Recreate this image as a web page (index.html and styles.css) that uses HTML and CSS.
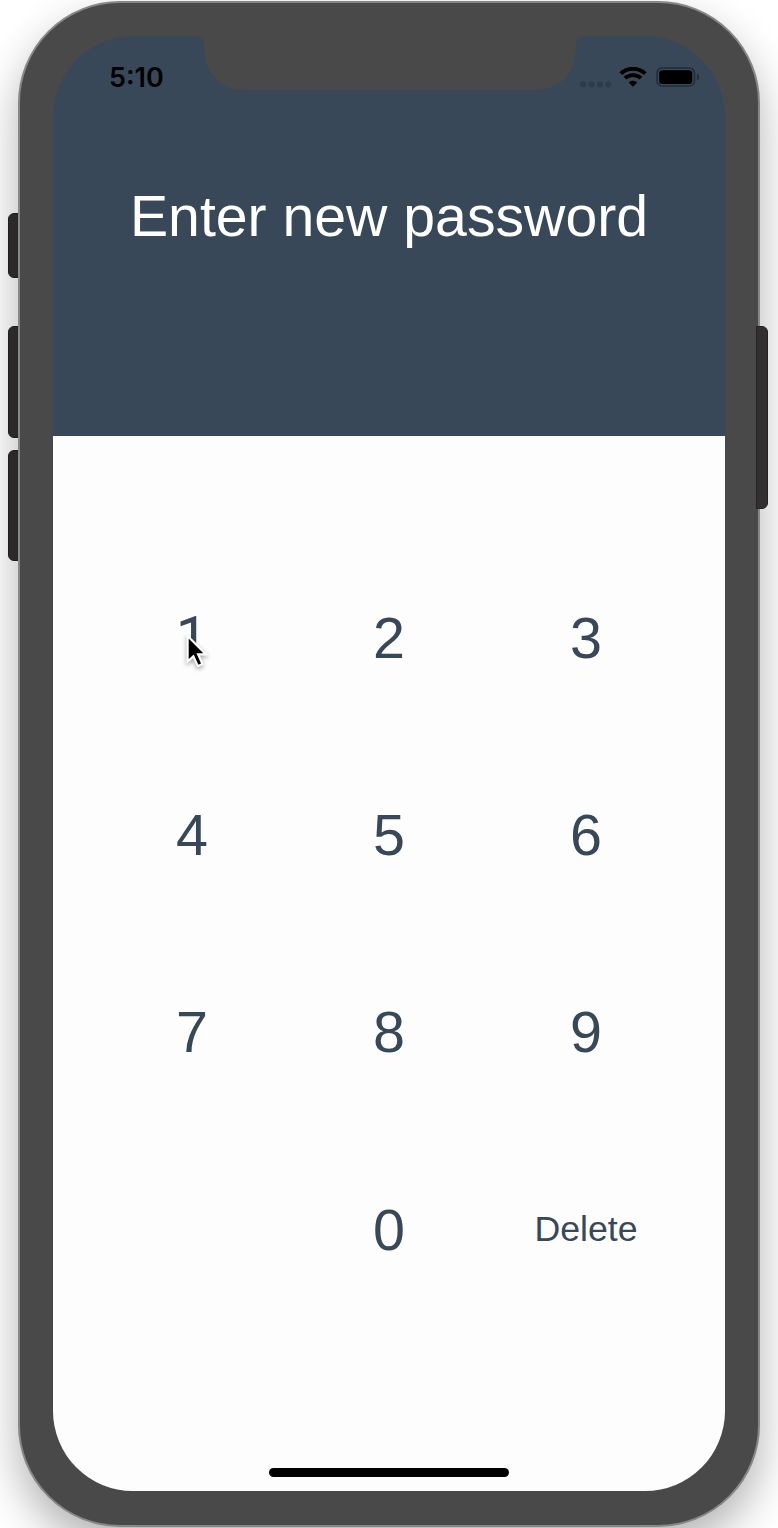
FILE: index.html
```
<!DOCTYPE html>
<html lang="en">
<head>
<meta charset="utf-8">
<title>Enter new password</title>
<link rel="stylesheet" href="styles.css">
</head>
<body>
<div class="phone">
  <span class="side-button mute"></span>
  <span class="side-button volume-up"></span>
  <span class="side-button volume-down"></span>
  <div class="case">
    <div class="screen">
      <header class="header">
        <div class="status-bar">
          <span class="time">5:10</span>
          <div class="indicators">
            <svg class="signal" width="32" height="7" viewBox="0 0 32 7"><circle cx="3.2" cy="3.5" r="3"/><circle cx="11.5" cy="3.5" r="3"/><circle cx="20" cy="3.5" r="3"/><circle cx="28.3" cy="3.5" r="3"/></svg>
            <svg class="wifi" width="28" height="20" viewBox="0 0 28 20"><path d="M1.8 6.7C8.4.2 19.6.2 26.2 6.7" fill="none" stroke="#000" stroke-width="4"/><path d="M6 11.2c4.3-4.2 11.7-4.2 16 0" fill="none" stroke="#000" stroke-width="3.8"/><path d="M14 19.8l-4.2-4.3c2.2-2.3 6.2-2.3 8.4 0z"/></svg>
            <svg class="battery" width="44" height="20" viewBox="0 0 44 20"><rect x="1" y="1" width="37.5" height="18" rx="5" fill="none" stroke="#202c38" stroke-width="1.6"/><rect x="3.2" y="3.2" width="33" height="13.8" rx="3"/><path d="M41 6.5q2.2 1.3 2.2 3.5T41 13.500z" fill="#202c38"/></svg>
          </div>
        </div>
        <h1 class="title">Enter new password</h1>
      </header>
      <main class="keypad">
        <button class="key one">1</button>
        <button class="key">2</button>
        <button class="key">3</button>
        <button class="key">4</button>
        <button class="key">5</button>
        <button class="key">6</button>
        <button class="key">7</button>
        <button class="key">8</button>
        <button class="key">9</button>
        <span></span>
        <button class="key">0</button>
        <button class="key delete">Delete</button>
      </main>
      <div class="home-indicator"></div>
    </div>
  </div>
  <span class="side-button power"></span>
  <svg class="notch" width="390" height="55" viewBox="0 0 390 55"><path d="M0 0H390V1H386Q378 1 377.500 9C377 39 363 55 335 55H55C27 55 13 39 12.500 9Q12 1 4 1H0z" transform="translate(-4 0) scale(1.0205 1)"/></svg>
  <svg class="cursor" width="27" height="40" viewBox="0 0 30 44"><path d="M4 2V30.500L10.400 24.600L15.400 35.500L20.500 33.200L15.700 22.500H24.500z" fill="#000" stroke="#fff" stroke-width="2.400"/></svg>
</div>
</body>
</html>
```
FILE: styles.css
```
* {
  box-sizing: border-box;
}

body {
  margin: 0;
  background: #fff;
  font-family: "Liberation Sans", Arial, sans-serif;
}

.phone {
  position: relative;
  width: 778px;
  height: 1528px;
  padding: 1px 18px 1px;
  overflow: hidden;
}

.case {
  position: relative;
  width: 742px;
  height: 1526px;
  padding: 33px;
  border: 2px solid #858889;
  border-radius: 102px;
  background: #494949;
  box-shadow: 0 20px 44px rgba(0, 0, 0, 0.3);
}

.screen {
  display: flex;
  flex-direction: column;
  align-items: center;
  width: 672px;
  height: 1455px;
  border-radius: 80px;
  overflow: hidden;
  background: linear-gradient(#384859 400px, #fdfdfd 400px);
}

.header {
  width: 100%;
  height: 400px;
}

.status-bar {
  display: flex;
  justify-content: space-between;
  height: 82px;
  padding: 25px 25px 0 56px;
}

.time {
  font: 600 27px/33px Inter, sans-serif;
  color: #000;
}

.indicators {
  display: flex;
  align-items: flex-start;
  padding-top: 6px;
}

.signal {
  margin: 14px 7px 0 0;
  fill: #2d3b4a;
}

.wifi {
  margin-right: 9px;
}

.title {
  margin: 64px 0 0;
  font-size: 57.2px;
  line-height: 68px;
  font-weight: 400;
  text-align: center;
  color: #fff;
}

.keypad {
  display: grid;
  grid-template-columns: repeat(3, 197px);
  grid-auto-rows: 197.3px;
  margin-top: 103px;
}

.key {
  padding: 0;
  border: 0;
  background: none;
  font: 57.5px "Liberation Sans", Arial, sans-serif;
  color: #384859;
}

.one {
  font-family: Roboto, sans-serif;
}

.delete {
  font-size: 35.7px;
}

.home-indicator {
  width: 240px;
  height: 9px;
  margin: auto 0 14px;
  border-radius: 5px;
  background: #000;
}

/* Hardware details that sit on the edge of the case */
.side-button {
  position: absolute;
  left: 8px;
  width: 14px;
  border: 1px solid #222;
  border-radius: 6px 0 0 6px;
  background: #332f30;
}

.mute {
  top: 213px;
  height: 65px;
}

.volume-up {
  top: 326px;
  height: 112px;
}

.volume-down {
  top: 450px;
  height: 111px;
}

.power {
  top: 326px;
  left: 756px;
  width: 12px;
  height: 183px;
  border-radius: 0 6px 6px 0;
}

.notch {
  position: absolute;
  top: 35px;
  left: 195px;
  fill: #494949;
}

.cursor {
  position: absolute;
  top: 634px;
  left: 184px;
  filter: drop-shadow(0 2px 2px rgba(0, 0, 0, 0.35));
}
```
